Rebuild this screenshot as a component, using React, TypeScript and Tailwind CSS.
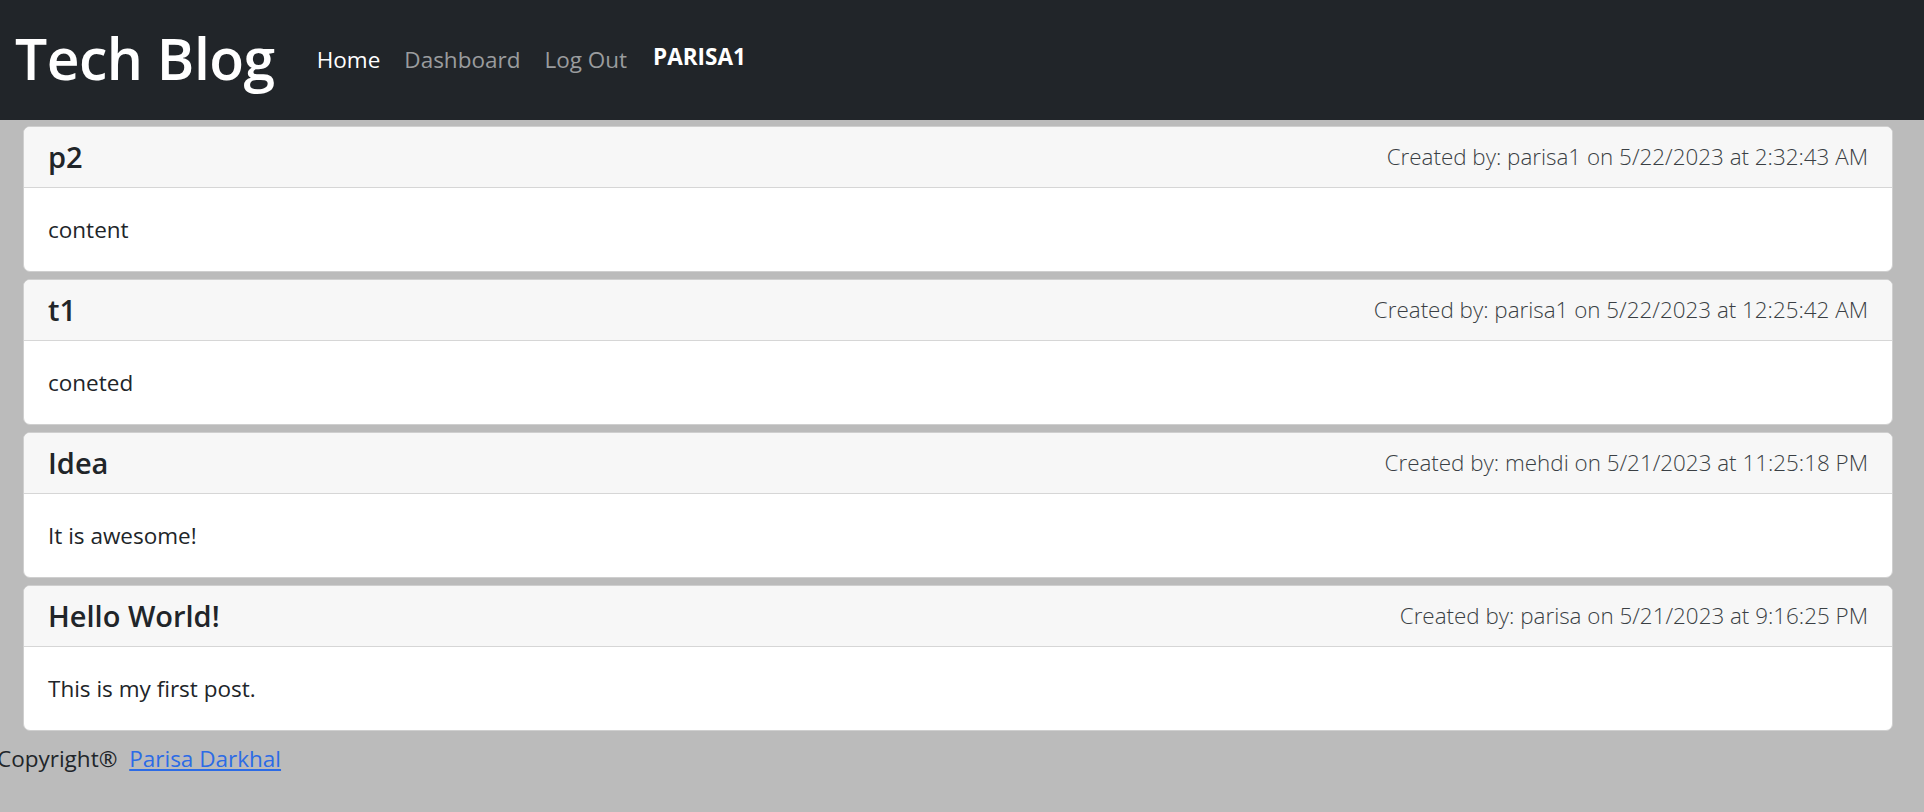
import React from "react";

const posts = [
  { title: "p2", meta: "Created by: parisa1 on 5/22/2023 at 2:32:43 AM", body: "content" },
  { title: "t1", meta: "Created by: parisa1 on 5/22/2023 at 12:25:42 AM", body: "coneted" },
  { title: "Idea", meta: "Created by: mehdi on 5/21/2023 at 11:25:18 PM", body: "It is awesome!" },
  { title: "Hello World!", meta: "Created by: parisa on 5/21/2023 at 9:16:25 PM", body: "This is my first post." },
];

export default function App() {
  return (
    <div className="min-h-[812px] bg-[#bbbbbb] text-[#212529] font-['Open_Sans',sans-serif]">
      <nav className="h-[120px] bg-[#212529] flex items-center pl-[15px]">
        <h1 className="text-[57px] font-semibold text-white tracking-[-0.5px] leading-none mb-[4px]">
          Tech Blog
        </h1>
        <ul className="flex items-center ml-[42px] text-[22.5px]">
          <li className="text-white">Home</li>
          <li className="text-[#9a9c9e] ml-[24px]">Dashboard</li>
          <li className="text-[#9a9c9e] ml-[24px]">Log Out</li>
          <li className="text-white font-bold ml-[26px] mb-[6px] text-[22.5px]">PARISA1</li>
        </ul>
      </nav>
      <main className="pl-[23px] pr-[31px] pt-[6px] flex flex-col gap-[7px]">
        {posts.map((p) => (
          <div key={p.title} className="bg-white rounded-[7px] border border-[#cfcfcf] overflow-hidden">
            <div className="h-[61px] bg-[#f7f7f7] border-b border-[#d6d6d6] flex items-center justify-between px-[24px]">
              <h2 className="text-[29px] font-semibold">{p.title}</h2>
              <span className="text-[22.4px] font-light text-[#3a3f44]">{p.meta}</span>
            </div>
            <div className="h-[83px] flex items-center px-[24px] text-[22.5px]">
              <p>{p.body}</p>
            </div>
          </div>
        ))}
      </main>
      <footer className="mt-[11px] text-[22.5px] -ml-[3px]">
        Copyright® <a href="#" className="text-[#2c6be6] underline ml-[6px]">Parisa Darkhal</a>
      </footer>
    </div>
  );
}
